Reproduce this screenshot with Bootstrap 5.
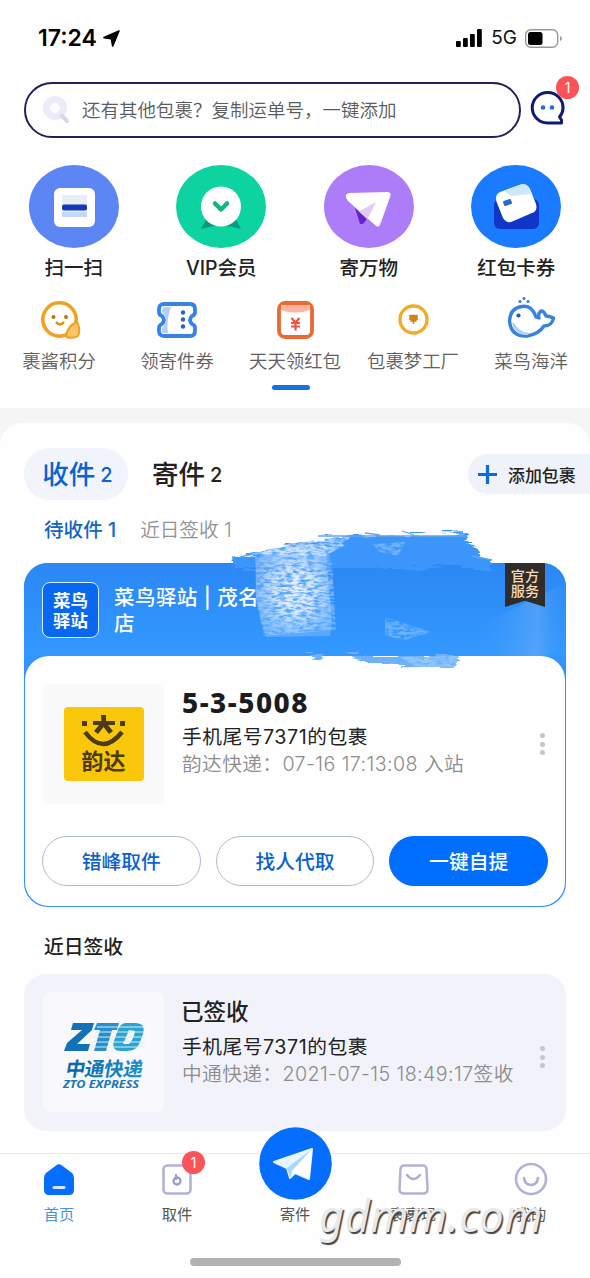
<!DOCTYPE html>
<html lang="zh-CN">
<head>
<meta charset="utf-8">
<meta name="viewport" content="width=device-width, initial-scale=1">
<title>菜鸟</title>
<link href="https://cdn.jsdelivr.net/npm/bootstrap@5.3.0/dist/css/bootstrap.min.css" rel="stylesheet">
<style>
body{font-family:Inter,"Noto Sans CJK SC",sans-serif;background:#fefefe;color:#222;width:590px;height:1278px;overflow:hidden}
svg{display:block;overflow:visible}
.status{height:82px;padding:4px 27px 10px 38px}
.clock{font-size:23px;font-weight:600;color:#000}
.net{font-size:19px;color:#111}
.search-row{height:56px;padding-left:24px}
.search-box{width:497px;height:56px;border:2px solid #24215a;border-radius:28px;padding-left:17px;font-size:18.5px;color:#5c5c5c;gap:12px;font-weight:350}
.search-box span{padding-top:2px}
.count{background:#fb5458;color:#fff;width:23px;height:23px;font-size:14px;line-height:23px;border-radius:50%;text-align:center}
.msg-count{left:25px;top:-15px}
.main-nav{padding-top:27px;height:159px}
.disc{width:90px;height:83px;border-radius:50%}
.main-nav span{font-size:19.5px;font-weight:500;line-height:28px;margin-top:6px}
.sub-nav{height:111px}
.sub-nav .pic{height:47px;padding-bottom:2px}
.sub-nav span{font-size:18.4px;line-height:26px;color:#606060;font-weight:350;margin-top:4px;white-space:nowrap}
.pager{width:38px;height:5px;border-radius:3px;background:#1470e4;margin:-23px 0 0 272px}
.band{background:#f5f5f6;margin-top:18px;height:39px}
.panel{margin-top:-24px;background:#fefefe;border-radius:22px 22px 0 0;padding:25px 0 0 24px}
.tabs{height:52px}
.tab-pill{height:52px;width:104px;border-radius:26px;background:#f1f4fa;color:#0b62d6;padding-left:3px}
.tab-t{font-size:26.5px;font-weight:500;padding-top:2px}
.tab-n{font-size:20px;font-weight:500;margin-left:5px;padding-top:2px}
.add-btn{height:40px;width:122px;border-radius:20px 0 0 20px;background:#eff2f8;font-size:16.9px;font-weight:500;padding-left:10px;gap:11px}
.subtabs{height:63px;padding:15px 0 0 20px;font-size:19.6px;line-height:30px}
.parcel{width:542px;height:344px;border-radius:24px;background:#3294fc;position:relative}
.parcel-head{height:93px;border-radius:24px 24px 0 0;background:linear-gradient(#2b87f4,#3399ff);padding:19px 0 0 18px}
.station{width:57px;height:56px;border:1.5px solid #d5ecff;border-radius:8px;background:#0868ef;color:#fff;font-size:17.5px;line-height:20px;font-weight:700;padding-top:8px;text-align:center}
.station-name{font-size:20.5px;line-height:26px;font-weight:500;color:#fff;margin-left:15px;margin-top:3px;letter-spacing:.45px}
.parcel-body{background:#fefefe;border-radius:24px;margin:0 1px;padding:28px 17px 0 18px;height:250px}
.tile{width:121px;height:120px;background:#f9f9f9;border-radius:8px;flex:none}
.info{margin-left:18px;white-space:nowrap}
.code{font-family:"Noto Sans",sans-serif;font-weight:800;font-size:28px;line-height:36px;color:#1c1c1c;letter-spacing:1.5px;margin-bottom:3px}
.l1{font-size:19.7px;line-height:28px;letter-spacing:.55px}
.l2{font-size:19.7px;line-height:26px;color:#8c8c8c;font-weight:350;letter-spacing:.4px}
.dots{width:5px;gap:3.5px;margin-right:3px}
.dots i{width:5px;height:5px;border-radius:50%;background:#c6c6ca}
.acts{margin:32px 0 0 -1px;gap:15px}
.act{height:50px;border-radius:25px;font-size:19.8px;font-weight:500;color:#0b62cf;border:1.5px solid #b0bdcf;padding:3px 0 0;flex:1 1 0}
.act.go{background:#006eff;color:#fff;border-color:#006eff}
.ribbon{position:absolute;left:481px;top:0;width:40px;height:44px;background:#302c2c;color:#f6dbb8;font-size:14.2px;line-height:15px;text-align:center;padding-top:5px;font-weight:500;clip-path:polygon(0 0,100% 0,100% 100%,50% 86%,0 100%)}
.scribble{position:absolute;left:-24px;top:-63px;z-index:2}
.recent{font-size:19.8px;font-weight:500;line-height:30px;padding-left:20px;margin-top:25px}
.done{width:542px;height:157px;background:#f2f2fa;border-radius:22px;margin-top:12px;padding:18px 18px 0 19px}
.done .tile{background:#f9f9fc}
.done .dots{padding-bottom:9px}
.tabbar{height:125px;border-top:1.5px solid #ebebef;margin-top:22px;font-size:15.3px;color:#555;position:relative}
.tabbar .cell{width:118px;padding-top:6px}
.tabbar .pic{height:38px}
.tabbar span{line-height:22px;margin-top:6px}
.send{position:absolute;left:259px;top:-27px}
.home-bar{position:absolute;left:190px;top:104px;width:211px;height:8px;border-radius:4px;background:#b2b2b2}
.wm{position:absolute;left:319px;top:31px;font:italic 43.5px/60px "Noto Sans",sans-serif;color:#e9e9e9;text-shadow:1.5px 1.5px 1px #444;letter-spacing:.5px}
</style>
</head>
<body>
<div class="status d-flex align-items-center justify-content-between">
  <div class="d-flex align-items-center" style="gap:6px"><span class="clock">17:24</span>
    <svg width="17" height="17" viewBox="0 0 17 17"><path d="M16 1L1 7.6L8.3 8.6L9.700 16Z" stroke="#000" stroke-width="1.6" stroke-linejoin="round"/></svg></div>
  <div class="d-flex align-items-center" style="gap:8px">
    <svg width="27" height="18"><rect x="0" y="12" width="4.8" height="6" rx="1"/><rect x="7" y="9" width="4.8" height="9" rx="1"/><rect x="14" y="5" width="4.8" height="13" rx="1"/><rect x="21" y="0" width="4.8" height="18" rx="1"/></svg>
    <span class="net">5G</span>
    <svg width="38" height="19"><rect x=".7" y=".7" width="32" height="17.5" rx="5" fill="none" stroke="#999" stroke-width="1.4"/><rect x="3" y="3" width="14.5" height="13" rx="2.5"/><path d="M35 7v5q2-1 2-2.500t-2-2.500" fill="#999"/></svg>
  </div>
</div>

<div class="search-row d-flex align-items-center">
  <div class="search-box d-flex align-items-center">
    <svg width="27" height="28" viewBox="0 0 27 28"><circle cx="12" cy="12" r="12" fill="#ebebf9"/><circle cx="12" cy="12" r="5" fill="#fcfcff"/><path d="M19 20l5 5" stroke="#d8d6ea" stroke-width="4" stroke-linecap="round"/></svg>
    <span>还有其他包裹？复制运单号，一键添加</span>
  </div>
  <div class="position-relative" style="margin-left:10px;margin-top:-4px">
    <svg width="34" height="34" viewBox="0 0 34 34"><path d="M16.500 1.500A15 15 0 0 0 16.500 32H30.500V29L28.500 26Q32 22 32 17A15.200 15.200 0 0 0 16.500 1.500Z" fill="#fff" stroke="#111a72" stroke-width="3" stroke-linejoin="round"/><circle cx="12" cy="16.500" r="2.300" fill="#286cd3"/><circle cx="21" cy="16.500" r="2.300" fill="#286cd3"/></svg>
    <span class="count position-absolute msg-count">1</span>
  </div>
</div>

<div class="main-nav row g-0 text-center">
  <div class="col d-flex flex-column align-items-center">
    <svg class="disc" viewBox="0 0 90 83" style="background:#5d86f5"><rect x="25" y="23" width="41" height="39" rx="6" fill="#fff"/><rect x="33" y="30" width="25" height="22" fill="#e8eef9"/><rect x="33" y="47" width="25" height="5" fill="#c3d8f7"/><rect x="33" y="39.500" width="25" height="6" rx="2" fill="#1638bb"/></svg>
    <span>扫一扫</span></div>
  <div class="col d-flex flex-column align-items-center">
    <svg class="disc" viewBox="0 0 90 83" style="background:#0cd3a0"><path d="M25 64L32 51H58L65 64Q45 57 25 64" fill="#06997e"/><circle cx="45" cy="41.500" r="20" fill="#fff"/><path d="M39 38.500l6 6 6-6" fill="none" stroke="#12b486" stroke-width="4.500" stroke-linecap="round" stroke-linejoin="round"/></svg>
    <span>VIP会员</span></div>
  <div class="col d-flex flex-column align-items-center">
    <svg class="disc" viewBox="0 0 90 83" style="background:#ad7df9"><path d="M25 28L64 27Q68 28 66 32L56 60Q54 63 51 60L24 36Q19 29 25 28Z" fill="#fff"/><path d="M52 37L34 47L43 55Z" fill="#e3c9fa"/><path d="M31 43L36 59H39L43 54Z" fill="#6523cb"/></svg>
    <span>寄万物</span></div>
  <div class="col d-flex flex-column align-items-center">
    <svg class="disc" viewBox="0 0 90 83" style="background:#1a7bff"><rect x="23" y="34" width="45" height="30" rx="6" fill="#1036c7"/><path d="M29 27L50 19.500Q56 18 59 24L65 39Q67 46 61 48L40 57Q35 58 32 53L26 38Q23 30 29 27Z" fill="#fff"/><path d="M33 25.500L50 19.500Q56 18 58 23L61 29L40 31Z" fill="#cde8fb"/><path d="M33 37l6-2 1 3-6 2Z" fill="#266ac2" stroke="#266ac2" stroke-width="2" stroke-linejoin="round"/></svg>
    <span>红包卡券</span></div>
</div>

<div class="sub-nav d-flex text-center">
  <div class="col d-flex flex-column align-items-center"><div class="pic d-flex align-items-center">
    <svg width="40" height="38" viewBox="0 0 40 38" style="margin-left:3px"><circle cx="18.500" cy="18.500" r="16.700" fill="#fff" stroke="#efa222" stroke-width="3.600"/><path d="M25 36Q26 25 36 21Q40 28 37 35Q32 38 25 36" fill="#fbc464" stroke="#efa222" stroke-width="2"/><circle cx="12.500" cy="16" r="2" fill="#b2741e"/><circle cx="25" cy="16" r="2" fill="#b2741e"/><path d="M15 21q4 5 8 0" fill="none" stroke="#df8f18" stroke-width="2.500"/></svg></div><span>裹酱积分</span></div>
  <div class="col d-flex flex-column align-items-center"><div class="pic d-flex align-items-center">
    <svg width="40" height="36" viewBox="0 0 40 36"><path d="M7 2H33Q38 2 38 7V10Q38 13 35 14Q31 18 35 22Q38 23 38 26V29Q38 34 33 34H7Q2 34 2 29V26Q2 23 5 22Q9 18 5 14Q2 13 2 10V7Q2 2 7 2Z" fill="#fff" stroke="#3683e5" stroke-width="3.800"/><path d="M6 5H14Q9 18 11 31H5V26Q13 18 5 10Z" fill="#b3cefb"/><g fill="#2c64b9"><circle cx="26" cy="10.500" r="2.200"/><circle cx="26" cy="17.500" r="2.200"/><circle cx="26" cy="24.500" r="2.200"/></g></svg></div><span>领寄件券</span></div>
  <div class="col d-flex flex-column align-items-center"><div class="pic d-flex align-items-center">
    <svg width="37" height="38" viewBox="0 0 37 38"><rect x="2" y="2" width="33" height="34" rx="6" fill="#fff" stroke="#e96a35" stroke-width="3.800"/><path d="M4 4H33V9Q18.500 14 4 9Z" fill="#ffb2a0"/><path d="M14.500 17l4 4.500 4-4.500M18.500 21.500v8M14 22h9M14 25.500h9" fill="none" stroke="#ed5440" stroke-width="2.200"/></svg></div><span>天天领红包</span></div>
  <div class="col d-flex flex-column align-items-center"><div class="pic d-flex align-items-center">
    <svg width="31" height="31" viewBox="0 0 31 31"><circle cx="15.500" cy="15.500" r="13.500" fill="#fff" stroke="#f2ab26" stroke-width="3.300"/><path d="M12 11.500h7v4h-7zM15.500 11v9M12.500 17h6" stroke="#d28318" stroke-width="1.500" fill="#d28318"/></svg></div><span>包裹梦工厂</span></div>
  <div class="col d-flex flex-column align-items-center"><div class="pic d-flex align-items-center">
    <svg width="47" height="42" viewBox="0 0 47 42" style="margin-top:-3px"><path d="M28 20Q24 8 14 9.500Q2 11 1.500 24Q3 40 19 39Q31 37 36 29Q44 29 45.500 21Q41 19 38 19Q35 12 32 15Q30 17 31 21Z" fill="#fff" stroke="#3683de" stroke-width="3.400" stroke-linejoin="round"/><path d="M5 26Q9 35 20 37Q8 38 5 26" fill="#b5cff6" stroke="#b5cff6" stroke-width="2"/><circle cx="10.500" cy="18.500" r="2.100" fill="#2558a0"/><g fill="#3683de"><circle cx="12" cy="4.500" r="1.600"/><circle cx="16" cy="1.500" r="1.600"/><circle cx="20" cy="4.500" r="1.600"/></g></svg></div><span>菜鸟海洋</span></div>
</div>
<div class="pager"></div>
<div class="band"></div>

<main class="panel">
  <div class="tabs d-flex align-items-center">
    <div class="tab-pill d-flex align-items-center justify-content-center"><span class="tab-t">收件</span><span class="tab-n">2</span></div>
    <div class="d-flex align-items-center" style="margin-left:24px"><span class="tab-t">寄件</span><span class="tab-n">2</span></div>
    <div class="add-btn d-flex align-items-center ms-auto"><svg width="19" height="19"><path d="M9.500 0v19M0 9.500h19" stroke="#096bdc" stroke-width="3.200"/></svg><span class="pt-1" style="line-height:20px">添加包裹</span></div>
  </div>
  <div class="subtabs d-flex"><span style="color:#1166c7;font-weight:500">待收件 1</span><span style="margin-left:24px;color:#929292;font-weight:350">近日签收 1</span></div>

  <section class="parcel">
    <div class="parcel-head d-flex">
      <div class="station">菜鸟<br>驿站</div>
      <div class="station-name">菜鸟驿站 | 茂名<br>店</div>
    </div>
    <div class="parcel-body">
      <div class="d-flex">
        <div class="tile d-flex align-items-center justify-content-center">
          <svg width="80" height="74" viewBox="0 0 80 74"><rect width="80" height="74" rx="4" fill="#fbc70b"/><g fill="#4d3c12"><rect x="18" y="14" width="5" height="5"/><rect x="56" y="14" width="5" height="5"/><path d="M37 8h5v6h9v4h-7l5 6-4 3-5.500-7-5.500 7-4-3 5-6h-6v-4h8.500z"/></g><path d="M21 25Q39 49 58 25" fill="none" stroke="#4d3c12" stroke-width="4.500"/><text x="39.500" y="62" text-anchor="middle" font-family="Noto Sans CJK SC,sans-serif" font-weight="700" font-size="22" fill="#4d3c12">韵达</text></svg>
        </div>
        <div class="info"><div class="code">5-3-5008</div><div class="l1">手机尾号7371的包裹</div><div class="l2">韵达快递：07-16 17:13:08 入站</div></div>
        <div class="dots d-flex flex-column justify-content-center ms-auto"><i></i><i></i><i></i></div>
      </div>
      <div class="acts d-flex">
        <button class="act btn">错峰取件</button><button class="act btn">找人代取</button><button class="act btn go">一键自提</button>
      </div>
    </div>
    <svg class="scribble" width="590" height="190" viewBox="0 500 590 190">
      <defs>
        <filter id="rough" x="-5%" y="-10%" width="110%" height="120%"><feTurbulence type="fractalNoise" baseFrequency=".03 .3" numOctaves="3" seed="7"/><feDisplacementMap in="SourceGraphic" scale="14" xChannelSelector="R" yChannelSelector="G"/></filter>
        <filter id="chalk" x="-5%" y="-5%" width="110%" height="110%"><feTurbulence type="fractalNoise" baseFrequency=".14 .4" numOctaves="3" seed="3"/><feColorMatrix values="0 0 0 0 .86 0 0 0 0 .93 0 0 0 0 1 3 0 0 0 -.85"/><feComposite in2="SourceGraphic" operator="in"/></filter>
        <radialGradient id="fade"><stop offset="0" stop-color="#fff"/><stop offset=".5" stop-color="#fff" stop-opacity=".8"/><stop offset="1" stop-color="#fff" stop-opacity=".3"/></radialGradient>
        <linearGradient id="sweep"><stop offset="0" stop-color="#3b94f8" stop-opacity="0"/><stop offset=".7" stop-color="#75b4f5" stop-opacity=".45"/><stop offset="1" stop-color="#3b94f8" stop-opacity=".1"/></linearGradient>
      </defs>
      <path d="M480 625L566 583V630Q560 656 540 656H470Z" fill="url(#sweep)"/>
      <g filter="url(#rough)">
        <path d="M232 558L270 549L318 538L375 536L470 533L466 541L478 548L480 554L492 561L490 568L234 568Z" fill="#3a95fa"/>
        <path d="M305 654H328L322 662ZM345 656L380 664L430 668L455 668L458 656Z" fill="#6eb1fa"/>
      </g>
      <path d="M318 536H466M365 533l15 2M240 557L314 541M402 531l12 4M472 556l20 4" stroke="#63a5ed" stroke-width="1.300" fill="none"/>
      <path d="M256 563L262 552L325 543L332 625L330 636L266 637L256 600Z" fill="#b5d7ff" opacity=".3"/>
      <path d="M255 551L325 545L332 560L336 630L264 636L256 600Z" fill="url(#fade)" filter="url(#chalk)"/>
      <path d="M250 554L310 538L350 537L345 545L325 556Z" fill="#fff" opacity=".6" filter="url(#chalk)"/>
      <path d="M372 544L405 542L398 556L380 552ZM385 617L432 632L405 640L385 636ZM400 657L458 656L454 670L415 666Z" fill="#fff" opacity=".3" filter="url(#chalk)"/>
    </svg>
    <div class="ribbon" style="z-index:3">官方<br>服务</div>
  </section>

  <h2 class="recent mb-0">近日签收</h2>
  <section class="done d-flex">
    <div class="tile d-flex align-items-center justify-content-center">
      <svg width="82" height="72" viewBox="0 0 82 72" style="margin-top:14px"><defs><linearGradient id="z"><stop stop-color="#0a63ad"/><stop offset="1" stop-color="#1691c9"/></linearGradient></defs>
        <path d="M10 0H31L29 7L14 21H27L25 28H1L4 20L19 7H8Z" fill="#1271b7"/><path d="M34 0H56L54 7H49L43 28H31L37 7H31Z" fill="#278fca"/><path d="M63 0H72Q83 0 80 11L77 19Q74 28 64 28H58Q48 28 51 18L54 9Q57 0 63 0ZM66 7L60 21H66Q70 18 72 8Z" fill="#2da4cf" fill-rule="evenodd"/><path d="M34 4H82M32 9H82M30 14H82M29 19H82M28 24H82" stroke="#d8edf6" stroke-width="1"/>
        <text x="1" y="53" font-family="Noto Sans CJK SC,sans-serif" font-weight="700" font-size="19.500" fill="url(#z)" transform="translate(10 0) skewX(-10)" textLength="77">中通快递</text>
        <text x="0" y="65" font-family="Noto Sans,sans-serif" font-style="italic" font-weight="700" font-size="10.500" fill="#1679b5" textLength="76" lengthAdjust="spacingAndGlyphs">ZTO EXPRESS</text></svg>
    </div>
    <div class="info"><div style="font-size:22.500px;font-weight:500;line-height:38px;margin:1px 0 2px -1px">已签收</div><div class="l1">手机尾号7371的包裹</div><div class="l2">中通快递：2021-07-15 18:49:17签收</div></div>
    <div class="dots d-flex flex-column justify-content-center ms-auto"><i></i><i></i><i></i></div>
  </section>
</main>

<nav class="tabbar d-flex">
  <div class="cell d-flex flex-column align-items-center" style="color:#4595d9"><div class="pic d-flex align-items-center"><svg width="30" height="31"><path d="M12 1.500Q15-1 18 1.500L28 9Q30 11 30 14V26Q30 31 25 31H5Q0 31 0 26V14Q0 11 2 9Z" fill="#066eff"/><path d="M10 23.500H20" stroke="#d3e8ff" stroke-width="3" stroke-linecap="round"/></svg></div><span>首页</span></div>
  <div class="cell d-flex flex-column align-items-center"><div class="pic d-flex align-items-center position-relative"><svg width="30" height="31"><rect x="1.500" y="1.500" width="27" height="28" rx="4" fill="#fff" stroke="#b2b2df" stroke-width="2.600"/><circle cx="15" cy="17" r="3.500" fill="none" stroke="#9b9bd1" stroke-width="2.300"/><path d="M14 10v6" stroke="#9b9bd1" stroke-width="2"/></svg><b class="count position-absolute fw-normal" style="left:20px;top:-9px">1</b></div><span>取件</span></div>
  <div class="cell d-flex flex-column align-items-center"><div class="pic"></div><span>寄件</span></div>
  <div class="cell d-flex flex-column align-items-center"><div class="pic d-flex align-items-center"><svg width="31" height="31"><path d="M6 1.500H25Q28 1.500 28.500 5L29.500 25Q29.500 29.500 25 29.500H6Q1.500 29.500 1.500 25L2.500 5Q3 1.500 6 1.500Z" fill="#fff" stroke="#b2b2d5" stroke-width="2.500"/><path d="M9 11q6.500 8 13 0" fill="none" stroke="#afafd2" stroke-width="2.500" stroke-linecap="round"/></svg></div><span>裹裹现</span></div>
  <div class="cell d-flex flex-column align-items-center"><div class="pic d-flex align-items-center"><svg width="34" height="34"><circle cx="17" cy="17" r="15" fill="#fff" stroke="#b2b2d5" stroke-width="2.600"/><path d="M10 16q1 7 7 7t7-7" fill="none" stroke="#afafd2" stroke-width="2.600" stroke-linecap="round"/></svg></div><span>我的</span></div>
  <svg class="send" width="73" height="73"><circle cx="36.500" cy="36.500" r="36.300" fill="#066eff"/><path d="M15 35L53 22L50 52L36 46L31 51L28 41Z" fill="#e8f5ff" stroke="#e8f5ff" stroke-width="2" stroke-linejoin="round"/><path d="M28 41L53 22L33 44L31 51Z" fill="#a6d8ff"/><path d="M33 44L53 22L50 52Z" fill="#fff"/></svg>
  <div class="home-bar"></div>
  <div class="wm">gdmm.com</div>
</nav>
<script src="https://cdn.jsdelivr.net/npm/bootstrap@5.3.0/dist/js/bootstrap.bundle.min.js"></script>
</body>
</html>
